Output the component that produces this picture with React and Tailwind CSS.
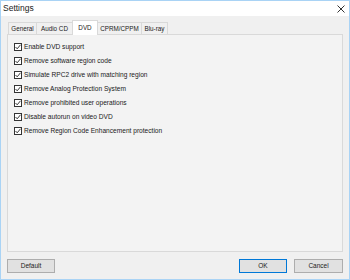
const OPTIONS = [
  'Enable DVD support',
  'Remove software region code',
  'Simulate RPC2 drive with matching region',
  'Remove Analog Protection System',
  'Remove prohibited user operations',
  'Disable autorun on video DVD',
  'Remove Region Code Enhancement protection',
];

const TABS = [
  { label: 'General', w: 'w-[29px]' },
  { label: 'Audio CD', w: 'w-[37px]' },
  { label: 'DVD', w: 'w-[26px]', active: true },
  { label: 'CPRM/CPPM', w: 'w-[45px]' },
  { label: 'Blu-ray', w: 'w-[27px]' },
];

function Check() {
  return (
    <span className="w-[8px] h-[8px] border border-[#333] bg-white flex items-center justify-center shrink-0">
      <svg width="6" height="6" viewBox="0 0 6 6">
        <path d="M0.5 3 L2.2 4.8 L5.5 0.8" fill="none" stroke="#222" strokeWidth="0.9" />
      </svg>
    </span>
  );
}

export default function App() {
  return (
    <div
      className="w-[350px] h-[280px] bg-[#f0f0f0] border border-[#a9d3f5] flex flex-col text-[#1a1a1a]"
      style={{ fontFamily: '"Liberation Sans", Arial, sans-serif' }}
    >
      <div className="h-[15px] bg-white flex items-center justify-between pl-[2px] pr-[4px] shrink-0">
        <span className="text-[8.5px] text-[#222]">Settings</span>
        <svg width="8" height="8" viewBox="0 0 8 8">
          <path d="M0.5 0.5 L7.5 7.5 M7.5 0.5 L0.5 7.5" stroke="#333" strokeWidth="1" />
        </svg>
      </div>

      <div className="flex items-end h-[18px] pl-[7px] shrink-0">
        {TABS.map((t) =>
          t.active ? (
            <div
              key={t.label}
              className={`${t.w} h-[15px] bg-white border border-b-0 border-[#d9d9d9] -ml-px text-[6.3px] flex items-center justify-center relative top-[1px]`}
            >
              {t.label}
            </div>
          ) : (
            <div
              key={t.label}
              className={`${t.w} h-[12px] bg-[#f0f0f0] border border-b-0 border-[#d9d9d9] -ml-px first:ml-0 text-[6.3px] flex items-center justify-center whitespace-nowrap`}
            >
              {t.label}
            </div>
          )
        )}
      </div>

      <div className="mx-[6px] h-[218px] border border-[#d9d9d9] bg-[#f3f3f3] pt-[8px] pl-[6px] flex flex-col gap-[6px]">
        {OPTIONS.map((o) => (
          <label key={o} className="flex items-center gap-[2px] text-[6.6px] h-[8px] leading-none">
            <Check />
            <span>{o}</span>
          </label>
        ))}
      </div>

      <div className="flex items-center mt-[7px] px-[6px]">
        <button className="w-[48px] h-[14px] bg-[#e1e1e1] border border-[#adadad] text-[6.5px]">Default</button>
        <div className="flex-1" />
        <button className="w-[48px] h-[14px] bg-[#e1e1e1] border border-[#0078d7] text-[6.5px]">OK</button>
        <button className="w-[49px] h-[14px] bg-[#e1e1e1] border border-[#adadad] text-[6.5px] ml-[7px]">Cancel</button>
      </div>
    </div>
  );
}
